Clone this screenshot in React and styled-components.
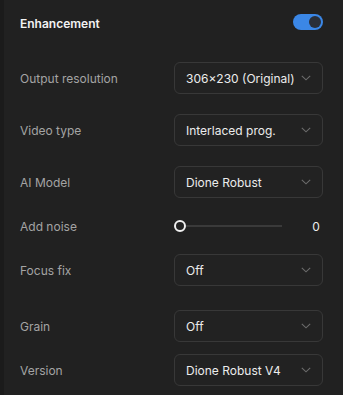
import React from "react";
import styled, { createGlobalStyle } from "styled-components";

const Global = createGlobalStyle`
  html, body { margin: 0; padding: 0; background: #212121; }
  body { font-family: Inter, "Noto Sans", sans-serif; -webkit-font-smoothing: antialiased; }
`;

const Panel = styled.div`
  width: 343px;
  height: 395px;
  box-sizing: border-box;
  background: #212121;
  border-left: 4px solid #1b1b1b;
  padding: 14px 20px 0 16px;
  display: flex;
  flex-direction: column;
`;

const Header = styled.div`
  display: flex;
  align-items: center;
  justify-content: space-between;
  height: 16px;
`;

const Title = styled.div`
  color: #f2f2f2;
  font-size: 12px;
  font-weight: 600;
  padding-top: 2px;
`;

const Toggle = styled.div`
  width: 30px;
  height: 16px;
  border-radius: 8px;
  background: #3b87e6;
  display: flex;
  align-items: center;
  justify-content: flex-end;
  padding: 0 2px;
  box-sizing: border-box;
`;

const Knob = styled.div`
  width: 12px;
  height: 12px;
  border-radius: 50%;
  background: #2a2f38;
`;

const Row = styled.div`
  display: flex;
  align-items: center;
  justify-content: space-between;
  margin-top: ${(p) => p.$gap}px;
  height: ${(p) => p.$h || 32}px;
`;

const Label = styled.div`
  color: #a4a4a4;
  font-size: 12px;
`;

const Select = styled.div`
  width: 149px;
  height: 32px;
  box-sizing: border-box;
  border: 1px solid #383838;
  border-radius: 6px;
  background: #222222;
  display: flex;
  align-items: center;
  justify-content: space-between;
  padding: 0 11px 0 11px;
  color: #ececec;
  font-size: 12px;
  white-space: nowrap;
`;

const Chevron = () => (
  <svg width="10" height="6" viewBox="0 0 10 6" fill="none">
    <path d="M0.8 0.8 L5 4.8 L9.2 0.8" stroke="#6c6c6c" strokeWidth="1.1" />
  </svg>
);

const Slider = styled.div`
  width: 149px;
  display: flex;
  align-items: center;
`;

const Thumb = styled.div`
  width: 12px;
  height: 12px;
  box-sizing: border-box;
  border-radius: 50%;
  border: 2px solid #f0f0f0;
  background: #222;
`;

const Track = styled.div`
  width: 96px;
  height: 2px;
  background: #3a3a3a;
`;

const Value = styled.div`
  margin-left: auto;
  width: 14px;
  text-align: center;
  color: #ececec;
  font-size: 12px;
`;

const rows = [
  { label: "Output resolution", value: "306×230 (Original)", gap: 32 },
  { label: "Video type", value: "Interlaced prog.", gap: 20 },
  { label: "AI Model", value: "Dione Robust", gap: 20 },
  { label: "Add noise", slider: true, gap: 20 },
  { label: "Focus fix", value: "Off", gap: 20 },
  { label: "Grain", value: "Off", gap: 24 },
  { label: "Version", value: "Dione Robust V4", gap: 12 },
];

export default function App() {
  return (
    <>
      <Global />
      <Panel>
        <Header>
          <Title>Enhancement</Title>
          <Toggle>
            <Knob />
          </Toggle>
        </Header>
        {rows.map((r) => (
          <Row key={r.label} $gap={r.gap} $h={r.slider ? 16 : 32}>
            <Label>{r.label}</Label>
            {r.slider ? (
              <Slider>
                <Thumb />
                <Track />
                <Value>0</Value>
              </Slider>
            ) : (
              <Select>
                <span>{r.value}</span>
                <Chevron />
              </Select>
            )}
          </Row>
        ))}
      </Panel>
    </>
  );
}
